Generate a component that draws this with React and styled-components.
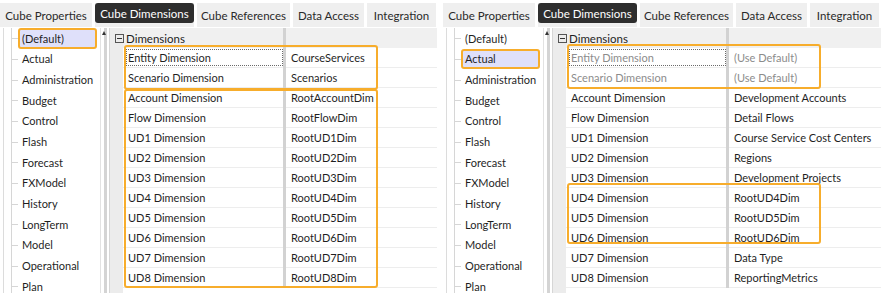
import React from "react";
import styled, { createGlobalStyle } from "styled-components";

const Global = createGlobalStyle`
  html, body { margin: 0; padding: 0; background: #fff; }
  body { font-family: "Lato", "Noto Sans", sans-serif; font-size: 11px; color: #1f1f1f; }
  * { box-sizing: border-box; }
`;

const ROW = 20;
const TREE_ROW = 20.67;
const ORANGE = "#f7ad2c";

const Page = styled.div`
  display: flex;
  gap: 6px;
  width: 881px;
  height: 293px;
  overflow: hidden;
`;

const Panel = styled.div`
  flex: 0 0 ${(p) => p.$w}px;
  display: flex;
  flex-direction: column;
  overflow: hidden;
`;

const TabBar = styled.div`
  display: flex;
  gap: 3px;
  height: 27px;
  padding-top: 3px;
`;

const Tab = styled.div`
  flex: 0 0 ${(p) => p.$w}px;
  background: #efefef;
  display: flex;
  align-items: flex-start;
`;

const TabLabel = styled.div`
  width: 100%;
  height: ${(p) => (p.$active ? 20 : 24)}px;
  display: flex;
  align-items: center;
  justify-content: center;
  border-radius: ${(p) => (p.$active ? 3 : 0)}px;
  background: ${(p) => (p.$active ? "#2e2e2e" : "transparent")};
  color: ${(p) => (p.$active ? "#ffffff" : "#2a2a2a")};
  font-size: 11.5px;
  white-space: nowrap;
`;

const Content = styled.div`
  flex: 1;
  display: flex;
  padding-left: 3px;
  padding-top: 1px;
  min-height: 0;
`;

const TreePane = styled.div`
  flex: 0 0 94px;
  min-width: 0;
  overflow: hidden;
  border-left: 1px solid #dcdcdc;
  padding-left: 7px;
`;

const TreeList = styled.div`
  border-left: 1px solid #d6d6d6;
  margin-top: 10px;
`;

const TreeItem = styled.div`
  position: relative;
  height: ${TREE_ROW}px;
  margin-top: ${(p) => (p.$first ? -10 : 0)}px;
  margin-left: 6px;
  display: flex;
  align-items: center;
  padding-left: 2px;
  white-space: nowrap;
  background: ${(p) => (p.$sel ? "#dfe0fa" : "transparent")};
  border: 2px solid ${(p) => (p.$mark ? ORANGE : "transparent")};
  border-radius: 3px;
  &::before {
    content: "";
    position: absolute;
    left: -8px;
    top: 50%;
    width: 6px;
    border-top: 1px solid #d6d6d6;
  }
`;

const ScrollBar = styled.div`
  flex: 0 0 12px;
  padding: 0 2px 0 3px;
  display: flex;
`;

const Track = styled.div`
  flex: 1;
  position: relative;
  border-left: 1px solid #e2e2e2;
  display: flex;
  justify-content: flex-end;
`;

const Arrow = styled.div`
  position: absolute;
  left: 1px;
  top: 3px;
  width: 0;
  height: 0;
  border-left: 2px solid transparent;
  border-right: 2px solid transparent;
  border-bottom: 4px solid #333;
`;

const Thumb = styled.div`
  width: 3px;
  background: #d4d4d4;
`;

const Grid = styled.div`
  flex: 1;
  min-width: 0;
  position: relative;
  border-left: 1px solid #d6d6d6;
  background: linear-gradient(to right, #ececec 0 13px, #ffffff 13px);
`;

const GridRow = styled.div`
  display: grid;
  grid-template-columns: 13px 160px 3px 1fr;
  height: ${ROW}px;
`;

const Gutter = styled.div`
  background: #ececec;
  display: flex;
  align-items: center;
  justify-content: flex-end;
`;

const Collapse = styled.div`
  position: relative;
  width: 9px;
  height: 9px;
  border: 1px solid #555;
  margin-right: -1px;
  &::after {
    content: "";
    position: absolute;
    left: 1px;
    right: 1px;
    top: 3px;
    border-top: 1px solid #333;
  }
`;

const HeaderCell = styled.div`
  background: #f0f0f0;
  display: flex;
  align-items: center;
  padding-left: 3px;
  font-size: 11.5px;
  color: #1f1f1f;
`;

const Divider = styled.div`
  background: #d2d2d2;
`;

const NameCell = styled.div`
  display: flex;
  padding: 1px 0 1px 3px;
  border-bottom: 1px solid #ededed;
  background: #fff;
  min-width: 0;
`;

const NameText = styled.div`
  flex: 1;
  display: flex;
  align-items: center;
  padding-left: 1px;
  border: 1px dotted ${(p) => (p.$focus ? "#6a6a6a" : "transparent")};
  color: ${(p) => (p.$dim ? "#8c8c8c" : "#1f1f1f")};
  white-space: nowrap;
`;

const ValueCell = styled.div`
  display: flex;
  align-items: center;
  padding-left: 5px;
  border-bottom: 1px solid #ededed;
  background: #fff;
  min-width: 0;
  overflow: hidden;
  color: ${(p) => (p.$dim ? "#8c8c8c" : "#1f1f1f")};
  white-space: nowrap;
`;

const Mark = styled.div`
  position: absolute;
  left: 14px;
  width: 254px;
  border: 2px solid ${ORANGE};
  border-radius: 3px;
  pointer-events: none;
`;

const tabs = [
  ["Cube Properties", 92],
  ["Cube Dimensions", 99],
  ["Cube References", 93],
  ["Data Access", 71],
  ["Integration", 69],
];

const tree = [
  "(Default)", "Actual", "Administration", "Budget", "Control", "Flash",
  "Forecast", "FXModel", "History", "LongTerm", "Model", "Operational", "Plan",
];

const names = [
  "Entity Dimension", "Scenario Dimension", "Account Dimension", "Flow Dimension",
  "UD1 Dimension", "UD2 Dimension", "UD3 Dimension", "UD4 Dimension",
  "UD5 Dimension", "UD6 Dimension", "UD7 Dimension", "UD8 Dimension",
];

const panels = [
  {
    w: 437,
    sel: 0,
    values: [
      "CourseServices", "Scenarios", "RootAccountDim", "RootFlowDim", "RootUD1Dim",
      "RootUD2Dim", "RootUD3Dim", "RootUD4Dim", "RootUD5Dim", "RootUD6Dim",
      "RootUD7Dim", "RootUD8Dim",
    ],
    dim: [],
    marks: [
      { top: 17, h: 45 },
      { top: 61, h: 199 },
    ],
  },
  {
    w: 438,
    sel: 1,
    values: [
      "(Use Default)", "(Use Default)", "Development Accounts", "Detail Flows",
      "Course Service Cost Centers", "Regions", "Development Projects", "RootUD4Dim",
      "RootUD5Dim", "RootUD6Dim", "Data Type", "ReportingMetrics",
    ],
    dim: [0, 1],
    marks: [
      { top: 16, h: 45 },
      { top: 155, h: 61 },
    ],
  },
];

function PanelView({ p }) {
  return (
    <Panel $w={p.w}>
      <TabBar>
        {tabs.map(([t, w], i) => (
          <Tab key={t} $w={w}>
            <TabLabel $active={i === 1}>{t}</TabLabel>
          </Tab>
        ))}
      </TabBar>
      <Content>
        <TreePane>
          <TreeList>
            {tree.map((t, i) => (
              <TreeItem key={t} $first={i === 0} $sel={i === p.sel} $mark={i === p.sel}>
                {t}
              </TreeItem>
            ))}
          </TreeList>
        </TreePane>
        <ScrollBar>
          <Track>
            <Arrow />
            <Thumb />
          </Track>
        </ScrollBar>
        <Grid>
          <GridRow>
            <Gutter>
              <Collapse />
            </Gutter>
            <HeaderCell>Dimensions</HeaderCell>
            <Divider />
            <HeaderCell />
          </GridRow>
          {names.map((n, i) => {
            const dim = p.dim.includes(i);
            return (
              <GridRow key={n}>
                <Gutter />
                <NameCell>
                  <NameText $focus={i === 0} $dim={dim}>{n}</NameText>
                </NameCell>
                <Divider />
                <ValueCell $dim={dim}>{p.values[i]}</ValueCell>
              </GridRow>
            );
          })}
          {p.marks.map((m, i) => (
            <Mark key={i} style={{ top: m.top, height: m.h }} />
          ))}
        </Grid>
      </Content>
    </Panel>
  );
}

export default function App() {
  return (
    <>
      <Global />
      <Page>
        {panels.map((p, i) => (
          <PanelView key={i} p={p} />
        ))}
      </Page>
    </>
  );
}
